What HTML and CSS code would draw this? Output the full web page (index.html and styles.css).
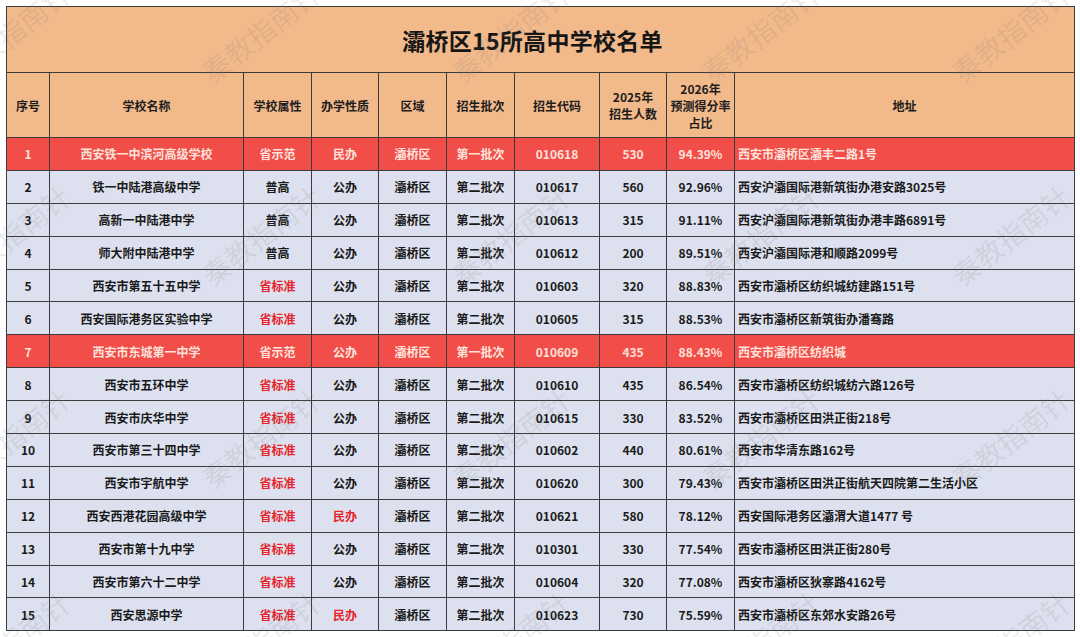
FILE: index.html
```html
<!DOCTYPE html>
<html lang="zh-CN">
<head>
<meta charset="utf-8">
<title>灞桥区15所高中学校名单</title>
<link rel="stylesheet" href="styles.css">
</head>
<body>
<div class="page">
  <table class="list">
    <colgroup>
      <col class="c-no"><col class="c-name"><col class="c-attr"><col class="c-type"><col class="c-area"><col class="c-batch"><col class="c-code"><col class="c-num"><col class="c-rate"><col class="c-addr">
    </colgroup>
    <thead>
      <tr class="title-row"><th colspan="10">灞桥区15所高中学校名单</th></tr>
      <tr class="head-row">
        <th>序号</th><th>学校名称</th><th>学校属性</th><th>办学性质</th><th>区域</th><th>招生批次</th><th>招生代码</th><th>2025年<br>招生人数</th><th>2026年<br>预测得分率<br>占比</th><th>地址</th>
      </tr>
    </thead>
    <tbody>
      <tr class="hot"><td>1</td><td>西安铁一中滨河高级学校</td><td>省示范</td><td>民办</td><td>灞桥区</td><td>第一批次</td><td>010618</td><td>530</td><td>94.39%</td><td class="addr">西安市灞桥区灞丰二路1号</td></tr>
      <tr><td>2</td><td>铁一中陆港高级中学</td><td>普高</td><td>公办</td><td>灞桥区</td><td>第二批次</td><td>010617</td><td>560</td><td>92.96%</td><td class="addr">西安沪灞国际港新筑街办港安路3025号</td></tr>
      <tr><td>3</td><td>高新一中陆港中学</td><td>普高</td><td>公办</td><td>灞桥区</td><td>第二批次</td><td>010613</td><td>315</td><td>91.11%</td><td class="addr">西安沪灞国际港新筑街办港丰路6891号</td></tr>
      <tr><td>4</td><td>师大附中陆港中学</td><td>普高</td><td>公办</td><td>灞桥区</td><td>第二批次</td><td>010612</td><td>200</td><td>89.51%</td><td class="addr">西安沪灞国际港和顺路2099号</td></tr>
      <tr><td>5</td><td>西安市第五十五中学</td><td class="red">省标准</td><td>公办</td><td>灞桥区</td><td>第二批次</td><td>010603</td><td>320</td><td>88.83%</td><td class="addr">西安市灞桥区纺织城纺建路151号</td></tr>
      <tr><td>6</td><td>西安国际港务区实验中学</td><td class="red">省标准</td><td>公办</td><td>灞桥区</td><td>第二批次</td><td>010605</td><td>315</td><td>88.53%</td><td class="addr">西安市灞桥区新筑街办潘骞路</td></tr>
      <tr class="hot"><td>7</td><td>西安市东城第一中学</td><td>省示范</td><td>公办</td><td>灞桥区</td><td>第一批次</td><td>010609</td><td>435</td><td>88.43%</td><td class="addr">西安市灞桥区纺织城</td></tr>
      <tr><td>8</td><td>西安市五环中学</td><td class="red">省标准</td><td>公办</td><td>灞桥区</td><td>第二批次</td><td>010610</td><td>435</td><td>86.54%</td><td class="addr">西安市灞桥区纺织城纺六路126号</td></tr>
      <tr><td>9</td><td>西安市庆华中学</td><td class="red">省标准</td><td>公办</td><td>灞桥区</td><td>第二批次</td><td>010615</td><td>330</td><td>83.52%</td><td class="addr">西安市灞桥区田洪正街218号</td></tr>
      <tr><td>10</td><td>西安市第三十四中学</td><td class="red">省标准</td><td>公办</td><td>灞桥区</td><td>第二批次</td><td>010602</td><td>440</td><td>80.61%</td><td class="addr">西安市华清东路162号</td></tr>
      <tr><td>11</td><td>西安市宇航中学</td><td class="red">省标准</td><td>公办</td><td>灞桥区</td><td>第二批次</td><td>010620</td><td>300</td><td>79.43%</td><td class="addr">西安市灞桥区田洪正街航天四院第二生活小区</td></tr>
      <tr><td>12</td><td>西安西港花园高级中学</td><td class="red">省标准</td><td class="red">民办</td><td>灞桥区</td><td>第二批次</td><td>010621</td><td>580</td><td>78.12%</td><td class="addr">西安国际港务区灞渭大道1477 号</td></tr>
      <tr><td>13</td><td>西安市第十九中学</td><td class="red">省标准</td><td>公办</td><td>灞桥区</td><td>第二批次</td><td>010301</td><td>330</td><td>77.54%</td><td class="addr">西安市灞桥区田洪正街280号</td></tr>
      <tr><td>14</td><td>西安市第六十二中学</td><td class="red">省标准</td><td>公办</td><td>灞桥区</td><td>第二批次</td><td>010604</td><td>320</td><td>77.08%</td><td class="addr">西安市灞桥区狄寨路4162号</td></tr>
      <tr><td>15</td><td>西安思源中学</td><td class="red">省标准</td><td class="red">民办</td><td>灞桥区</td><td>第二批次</td><td>010623</td><td>730</td><td>75.59%</td><td class="addr">西安市灞桥区东郊水安路26号</td></tr>
    </tbody>
  </table>
  <div class="watermarks" aria-hidden="true">
    <span>秦教指南针</span><span>秦教指南针</span><span>秦教指南针</span><span>秦教指南针</span><span>秦教指南针</span>
    <span>秦教指南针</span><span>秦教指南针</span><span>秦教指南针</span><span>秦教指南针</span><span>秦教指南针</span>
    <span>秦教指南针</span><span>秦教指南针</span><span>秦教指南针</span><span>秦教指南针</span><span>秦教指南针</span>
    <span>秦教指南针</span><span>秦教指南针</span><span>秦教指南针</span><span>秦教指南针</span><span>秦教指南针</span>
  </div>
</div>
</body>
</html>
```
FILE: styles.css
```css
html, body {
  margin: 0;
  padding: 0;
  background: #ffffff;
}
body {
  width: 1080px;
  height: 637px;
  overflow: hidden;
  font-family: "Noto Sans CJK SC", "Noto Sans", sans-serif;
}
.page {
  position: relative;
  padding: 6px 6px 0 6px;
  width: 1080px;
  height: 637px;
  box-sizing: border-box;
  overflow: hidden;
}
.list {
  border-collapse: collapse;
  table-layout: fixed;
  width: 1068px;
  color: #1a1a1a;
  font-size: 12px;
  font-weight: 700;
}
.c-no { width: 43px; }
.c-name { width: 194px; }
.c-attr { width: 68px; }
.c-type { width: 67px; }
.c-area { width: 68px; }
.c-batch { width: 68px; }
.c-code { width: 85px; }
.c-num { width: 67px; }
.c-rate { width: 68px; }
.c-addr { width: 340px; }

.list th, .list td {
  border: 1px solid #3c3c3c;
  padding: 0;
  text-align: center;
  vertical-align: middle;
  white-space: nowrap;
  overflow: hidden;
}
.title-row th {
  height: 65px;
  background: #f2b98b;
  font-size: 23px;
  font-weight: 700;
  color: #161616;
  letter-spacing: 0.3px;
  padding-right: 16px;
}
.head-row th {
  height: 64px;
  background: #f2b98b;
  font-size: 12px;
  line-height: 17px;
  color: #1d1d1d;
}
.list tbody td {
  height: 31.9px;
  background: #dde1ef;
}
.list td.addr {
  text-align: left;
  padding-left: 3px;
}
.list td.red {
  color: #e5242b;
}
.list tr.hot td {
  background: #f14e49;
  color: #fde2dc;
}
.watermarks {
  position: absolute;
  left: -115px;
  top: -70px;
  display: grid;
  grid-template-columns: repeat(5, 250px);
  grid-auto-rows: 203px;
  pointer-events: none;
}
.watermarks span {
  display: flex;
  align-items: center;
  justify-content: center;
  font-size: 28px;
  font-weight: 400;
  color: rgba(110, 110, 110, 0.14);
  transform: rotate(-38deg);
  white-space: nowrap;
}
```
